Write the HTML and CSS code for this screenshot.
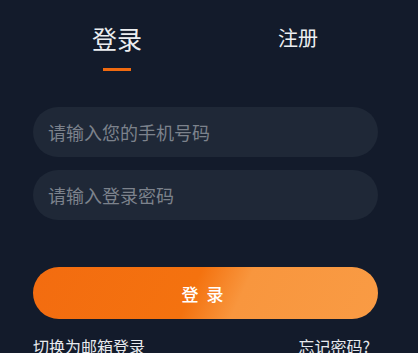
FILE: index.html
```html
<!DOCTYPE html>
<html lang="zh-CN">
<head>
    <meta charset="UTF-8" />
    <meta name="viewport" content="width=device-width, initial-scale=1.0" />
    <title>登录</title>
    <link rel="stylesheet" href="styles.css">
</head>
<body>
    <div class="login-page">
        <div class="tabs">
            <div class="tab active">登录</div>
            <div class="tab">注册</div>
        </div>

        <form class="login-form" onsubmit="return false">
            <input class="field" type="tel" placeholder="请输入您的手机号码" autocomplete="off" />
            <input class="field" type="password" placeholder="请输入登录密码" autocomplete="off" />
            <button class="submit-btn">登 录</button>
        </form>

        <div class="links">
            <a href="#">切换为邮箱登录</a>
            <a href="#">忘记密码?</a>
        </div>
    </div>
</body>
</html>
```

FILE: styles.css
```css
body {
    margin: 0;
    padding: 0;
    background-color: #131b2b;
    font-family: "Noto Sans CJK SC", "Noto Sans", sans-serif;
    color: #e8eaee;
}

.login-page {
    padding: 0 40px 0 33px;
}

.tabs {
    display: flex;
    justify-content: center;
    padding-top: 22px;
    margin-left: -33px;
    margin-right: -40px;
}

.tab {
    width: 181px;
    text-align: center;
    font-size: 20px;
    line-height: 32px;
    height: 49px;
    position: relative;
    color: #eceef1;
}

.tab.active {
    font-size: 25px;
    margin-left: -3px;
}

.tab.active::after {
    content: "";
    position: absolute;
    left: 50%;
    bottom: 0;
    width: 28px;
    height: 3px;
    margin-left: -14px;
    background-color: #f06a10;
}

.login-form {
    display: flex;
    flex-direction: column;
    margin-top: 36px;
}

.field {
    height: 50px;
    border: none;
    border-radius: 25px;
    background-color: #1f2837;
    padding: 0 15px;
    margin-bottom: 13px;
    font-family: inherit;
    font-size: 18px;
    color: #e8eaee;
    outline: none;
}

.field::placeholder {
    color: #7c828c;
}

.submit-btn {
    height: 52px;
    margin-top: 34px;
    border: none;
    border-radius: 26px;
    background: linear-gradient(115deg, #f36c10 0%, #f4720f 46%, #f8963e 60%, #f99b44 100%);
    color: #fff;
    font-family: inherit;
    font-size: 17px;
    font-weight: 500;
    letter-spacing: 2px;
    padding-left: 2px;
    cursor: pointer;
}

.links {
    display: flex;
    justify-content: space-between;
    margin-top: 15px;
    padding-right: 8px;
}

.links a {
    color: #e8eaee;
    text-decoration: none;
    font-size: 16px;
    line-height: 24px;
}
```
